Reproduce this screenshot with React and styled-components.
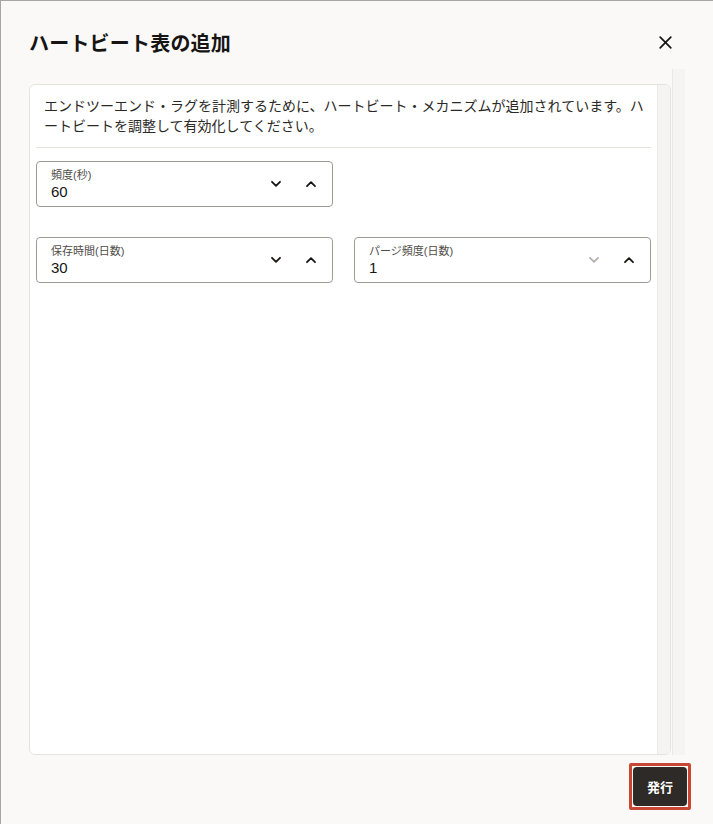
import styled, { createGlobalStyle } from "styled-components";

const GlobalStyle = createGlobalStyle`
  html, body {
    margin: 0;
    padding: 0;
    background: #faf9f8;
  }
  body {
    font-family: "Liberation Sans", "Noto Sans CJK JP", sans-serif;
    color: #161513;
  }
`;

function Chevron({ up, disabled }) {
  return (
    <svg width="12" height="8" viewBox="0 0 12 8">
      <path
        d={up ? "M2 6.2 L6 2.2 L10 6.2" : "M2 1.8 L6 5.8 L10 1.8"}
        fill="none"
        stroke={disabled ? "#b5b1ad" : "#161513"}
        strokeWidth="1.8"
        strokeLinecap="round"
        strokeLinejoin="round"
      />
    </svg>
  );
}

function NumberField({ label, value, downDisabled }) {
  return (
    <Field>
      <FieldText>
        <Label>{label}</Label>
        <Value>{value}</Value>
      </FieldText>
      <Step>
        <Chevron disabled={downDisabled} />
      </Step>
      <Step>
        <Chevron up />
      </Step>
    </Field>
  );
}

export default function App() {
  return (
    <>
      <GlobalStyle />
      <Dialog>
        <Header>
          <Title>ハートビート表の追加</Title>
          <Close aria-label="close">
            <svg width="13" height="13" viewBox="0 0 13 13">
              <path d="M1.2 1.2 L11.8 11.8 M11.8 1.2 L1.2 11.8" stroke="#161513" strokeWidth="1.7" strokeLinecap="round" />
            </svg>
          </Close>
        </Header>
        <Body>
          <Card>
            <Content>
              <Description>
                エンドツーエンド・ラグを計測するために、ハートビート・メカニズムが追加されています。ハートビートを調整して有効化してください。
              </Description>
              <Grid>
                <NumberField label="頻度(秒)" value="60" />
                <div />
                <NumberField label="保存時間(日数)" value="30" />
                <NumberField label="パージ頻度(日数)" value="1" downDisabled />
              </Grid>
            </Content>
            <InnerTrack />
          </Card>
          <OuterTrack />
        </Body>
        <Footer>
          <FocusRing>
            <Submit>発行</Submit>
          </FocusRing>
        </Footer>
      </Dialog>
    </>
  );
}

const Dialog = styled.div`
  display: flex;
  flex-direction: column;
  height: 100vh;
  box-sizing: border-box;
  border-top: 1px solid #a8a6a3;
  border-left: 1px solid #a8a6a3;
`;

const Header = styled.div`
  display: flex;
  align-items: center;
  justify-content: space-between;
  height: 68px;
  padding: 14px 41px 0 28px;
  box-sizing: border-box;
`;

const Title = styled.h1`
  margin: 0;
  font-size: 20px;
  font-weight: 700;
  letter-spacing: 0.2px;
  color: #161513;
`;

const Close = styled.button`
  border: none;
  background: none;
  padding: 0;
  display: flex;
  cursor: pointer;
`;

const Body = styled.div`
  flex: 1;
  display: flex;
  padding: 0 28px 0 28px;
  min-height: 0;
`;

const Card = styled.div`
  flex: 1;
  display: flex;
  margin-top: 15px;
  background: #fff;
  border: 1px solid #e6e3df;
  border-radius: 6px;
  overflow: hidden;
`;

const Content = styled.div`
  flex: 1;
  padding: 11px 6px 0 6px;
`;

const InnerTrack = styled.div`
  width: 12px;
  background: #f5f4f2;
  border-left: 1px solid #ebe9e6;
`;

const OuterTrack = styled.div`
  width: 12px;
  margin-left: 1px;
  background: #f5f4f2;
  border-left: 1px solid #ebe9e6;
`;

const Description = styled.p`
  margin: 0;
  padding: 0 3px 11px 8px;
  font-size: 14px;
  line-height: 20px;
  color: #2b2926;
  border-bottom: 1px solid #e6e3df;
`;

const Grid = styled.div`
  display: grid;
  grid-template-columns: 1fr 1fr;
  column-gap: 21px;
  row-gap: 30px;
  margin-top: 13px;
`;

const Field = styled.div`
  display: flex;
  align-items: center;
  height: 46px;
  box-sizing: border-box;
  border: 1px solid #9e9a95;
  border-radius: 4px;
  padding: 0 4px 0 14px;
`;

const FieldText = styled.div`
  flex: 1;
  display: flex;
  flex-direction: column;
  padding-top: 1px;
`;

const Label = styled.span`
  font-size: 11px;
  line-height: 14px;
  color: #4f4c48;
`;

const Value = styled.span`
  font-size: 15px;
  line-height: 19px;
  color: #161513;
`;

const Step = styled.span`
  display: flex;
  align-items: center;
  justify-content: center;
  width: 35px;
  height: 24px;
`;

const Footer = styled.div`
  display: flex;
  justify-content: flex-end;
  align-items: flex-start;
  height: 69px;
  padding: 8px 22px 0 0;
  box-sizing: border-box;
`;

const FocusRing = styled.span`
  display: flex;
  padding: 1px;
  border: 3px solid #c74634;
  border-radius: 2px;
`;

const Submit = styled.button`
  width: 54px;
  height: 39px;
  border: none;
  border-radius: 4px;
  background: #2e2a27;
  color: #fff;
  font-family: "Noto Sans CJK JP", sans-serif;
  font-size: 13px;
  font-weight: 700;
  cursor: pointer;
`;
